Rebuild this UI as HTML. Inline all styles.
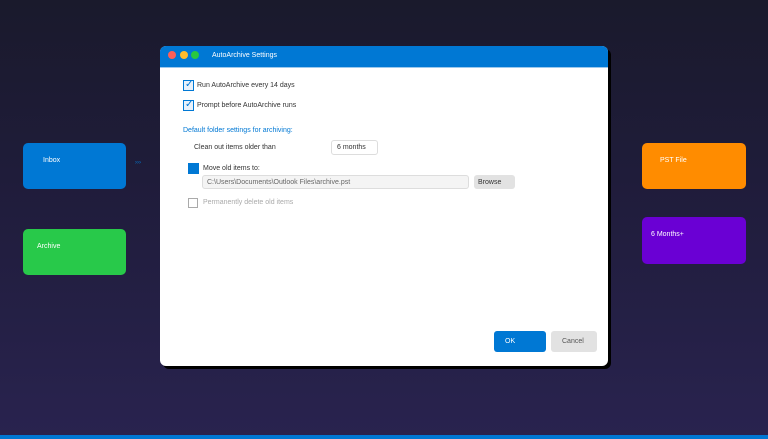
<!DOCTYPE html>
<html><head><style>
*{margin:0;padding:0;box-sizing:border-box}
body{width:768px;height:439px;overflow:hidden;position:relative;font-family:"Liberation Sans",sans-serif;background:linear-gradient(#1a1a2c,#1f1c3a 40%,#29234f);}
.box{position:absolute;border-radius:5px;color:#fff;font-size:7px;}
.dlg{position:absolute;left:160px;top:46px;width:448px;height:320px;background:#fff;border-radius:6px;box-shadow:3px 3px 0 #000;overflow:hidden}
.tb{height:22px;background:#0078d4;position:relative;border-bottom:1px solid #9cc8ec}
.dot{position:absolute;top:5px;width:8px;height:8px;border-radius:50%}
.t{position:absolute;font-size:7px;color:#333;white-space:nowrap;line-height:9px}
.cb{position:absolute;width:11px;height:11px;border:1.5px solid #0078d4;background:#e8f1fb}
</style></head><body>
<div class="box" style="left:23px;top:143px;width:103px;height:46px;background:#0078d4"><span style="position:absolute;left:20px;top:14px">Inbox</span></div>
<div style="position:absolute;left:135px;top:160px;color:#0078d4;font-size:6px">›››</div>
<div class="box" style="left:23px;top:229px;width:103px;height:46px;background:#28c94a"><span style="position:absolute;left:14px;top:14px">Archive</span></div>
<div class="box" style="left:642px;top:143px;width:104px;height:46px;background:#ff8c00"><span style="position:absolute;left:18px;top:14px">PST File</span></div>
<div class="box" style="left:642px;top:217px;width:104px;height:47px;background:#6a00d4"><span style="position:absolute;left:9px;top:14px">6 Months+</span></div>
<div class="dlg">
<div class="tb">
<div class="dot" style="left:8px;background:#ff5f57"></div>
<div class="dot" style="left:20px;background:#febc2e"></div>
<div class="dot" style="left:31px;background:#28c840"></div>
<div class="t" style="left:52px;top:5px;color:#fff">AutoArchive Settings</div>
</div>
<div class="cb" style="left:23px;top:34px"></div><div class="t" style="left:25px;top:34px;color:#0078d4;font-size:10px;line-height:10px">✓</div>
<div class="t" style="left:37px;top:35px">Run AutoArchive every 14 days</div>
<div class="cb" style="left:23px;top:54px"></div><div class="t" style="left:25px;top:54px;color:#0078d4;font-size:10px;line-height:10px">✓</div>
<div class="t" style="left:37px;top:55px">Prompt before AutoArchive runs</div>
<div class="t" style="left:23px;top:80px;color:#0078d4">Default folder settings for archiving:</div>
<div class="t" style="left:34px;top:97px">Clean out items older than</div>
<div style="position:absolute;left:171px;top:94px;width:47px;height:15px;border:1px solid #ddd;border-radius:3px"></div>
<div class="t" style="left:177px;top:97px">6 months</div>
<div style="position:absolute;left:28px;top:117px;width:11px;height:11px;background:#0078d4"></div>
<div class="t" style="left:43px;top:118px">Move old items to:</div>
<div style="position:absolute;left:42px;top:129px;width:267px;height:14px;border:1px solid #ddd;border-radius:3px;background:#f4f4f4"></div>
<div class="t" style="left:47px;top:132px;color:#666">C:\Users\Documents\Outlook Files\archive.pst</div>
<div style="position:absolute;left:314px;top:129px;width:41px;height:14px;border-radius:3px;background:#e2e2e2"></div>
<div class="t" style="left:318px;top:132px">Browse</div>
<div style="position:absolute;left:28px;top:152px;width:10px;height:10px;border:1px solid #aaa"></div>
<div class="t" style="left:43px;top:152px;color:#aaa">Permanently delete old items</div>
<div style="position:absolute;left:334px;top:285px;width:52px;height:21px;background:#0078d4;border-radius:3px"></div>
<div class="t" style="left:345px;top:291px;color:#fff">OK</div>
<div style="position:absolute;left:391px;top:285px;width:46px;height:21px;background:#e2e2e2;border-radius:3px"></div>
<div class="t" style="left:402px;top:291px;color:#555">Cancel</div>
</div>
<div style="position:absolute;left:0;top:435px;width:768px;height:4px;background:#0078d4"></div>
</body></html>
